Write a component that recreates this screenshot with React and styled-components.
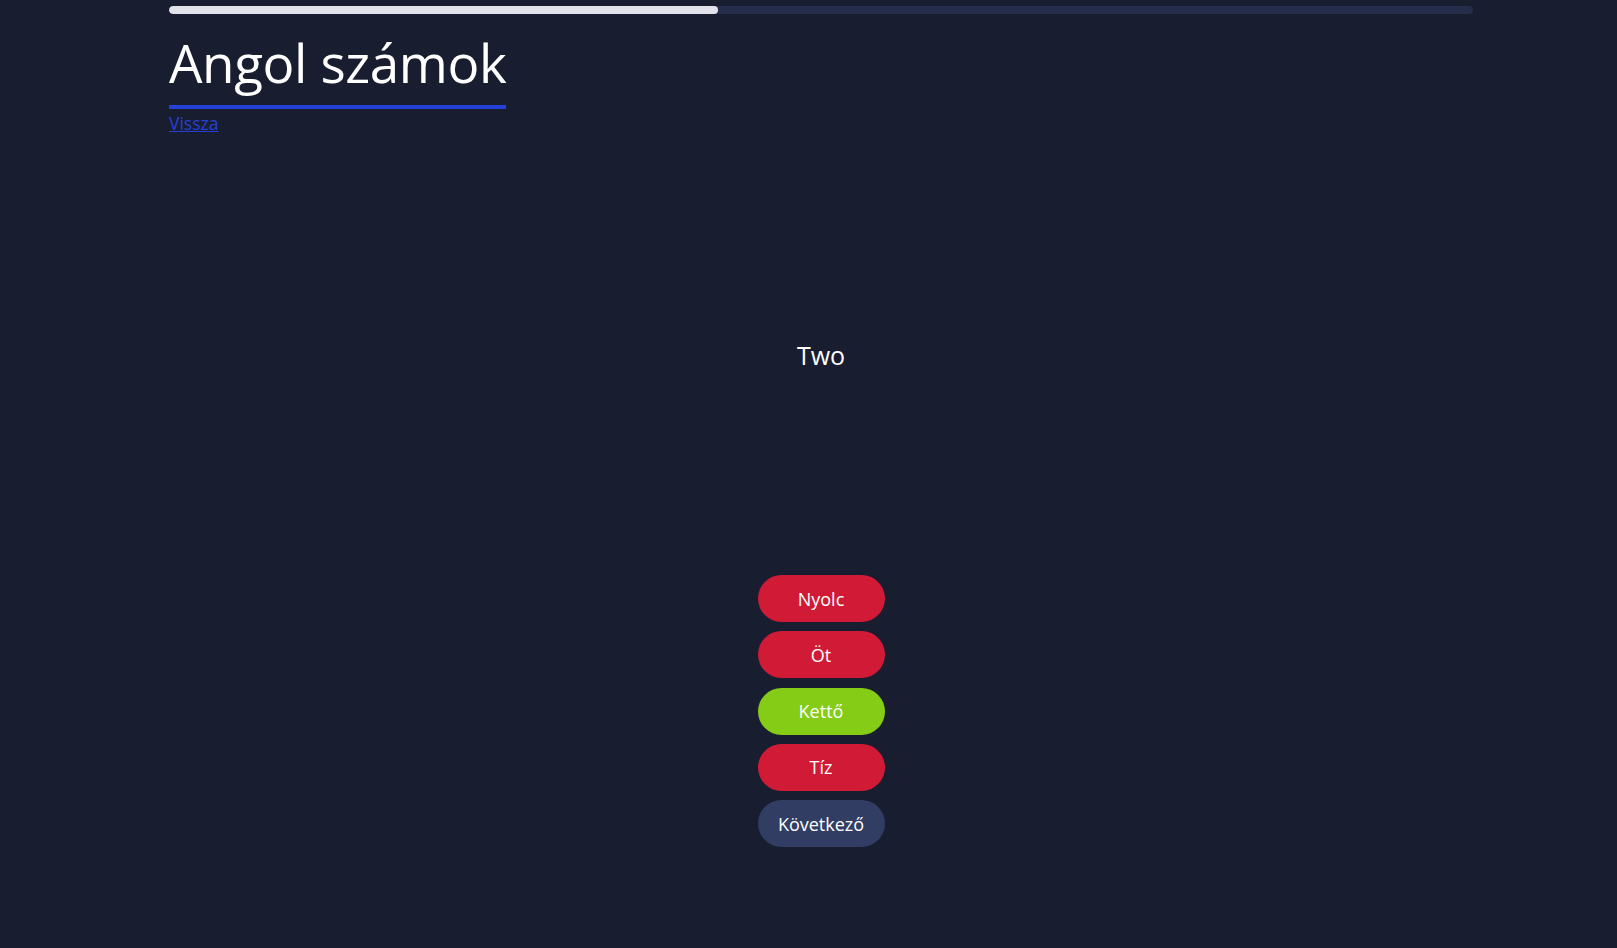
import React from 'react'
import styled, { createGlobalStyle } from 'styled-components'

const GlobalStyle = createGlobalStyle`
  html, body {
    margin: 0;
    padding: 0;
    background: #181d30;
    font-family: "Open Sans", "Noto Sans", sans-serif;
    color: #fff;
  }
`

const Page = styled.div`
  min-height: 948px;
  background: #181d30;
`

const Container = styled.div`
  width: 1304px;
  margin-left: 169px;
  padding-top: 6px;
  display: flex;
  flex-direction: column;
`

const Track = styled.div`
  height: 8px;
  border-radius: 4px;
  background: #252d4a;
  overflow: hidden;
`

const Fill = styled.div`
  height: 100%;
  border-radius: 4px;
  background: #e2e3ea;
`

const Title = styled.h1`
  align-self: flex-start;
  margin: 15px 0 0 0;
  padding-bottom: 8px;
  font-size: 53px;
  font-weight: 400;
  line-height: 68px;
  letter-spacing: -0.4px;
  border-bottom: 4px solid #2541d8;
`

const BackLink = styled.a`
  align-self: flex-start;
  margin-top: 2px;
  font-size: 17.5px;
  line-height: 24px;
  color: #2541d8;
  text-decoration: underline;
  cursor: pointer;
`

const Word = styled.div`
  margin-top: 203px;
  text-align: center;
  font-size: 25px;
  line-height: 34px;
`

const Answers = styled.div`
  margin-top: 203px;
  display: flex;
  flex-direction: column;
  align-items: center;
  gap: 9.3px;
`

const colors = {
  wrong: '#d11b36',
  right: '#84cc16',
  next: '#323d63',
}

const AnswerBtn = styled.button`
  width: 127px;
  height: 47px;
  border: none;
  border-radius: 24px;
  background: ${p => colors[p.$kind]};
  color: #fff;
  font-family: "Open Sans", "Noto Sans", sans-serif;
  font-size: 18px;
  cursor: pointer;
`

const answers = [
  { label: 'Nyolc', kind: 'wrong' },
  { label: 'Öt', kind: 'wrong' },
  { label: 'Kettő', kind: 'right' },
  { label: 'Tíz', kind: 'wrong' },
]

export default function App() {
  const progress = 42.1
  return (
    <Page>
      <GlobalStyle />
      <Container>
        <Track>
          <Fill style={{ width: `${progress}%` }} />
        </Track>
        <Title>Angol számok</Title>
        <BackLink>Vissza</BackLink>
        <Word>Two</Word>
        <Answers>
          {answers.map(a => (
            <AnswerBtn key={a.label} $kind={a.kind}>{a.label}</AnswerBtn>
          ))}
          <AnswerBtn $kind="next">Következő</AnswerBtn>
        </Answers>
      </Container>
    </Page>
  )
}
